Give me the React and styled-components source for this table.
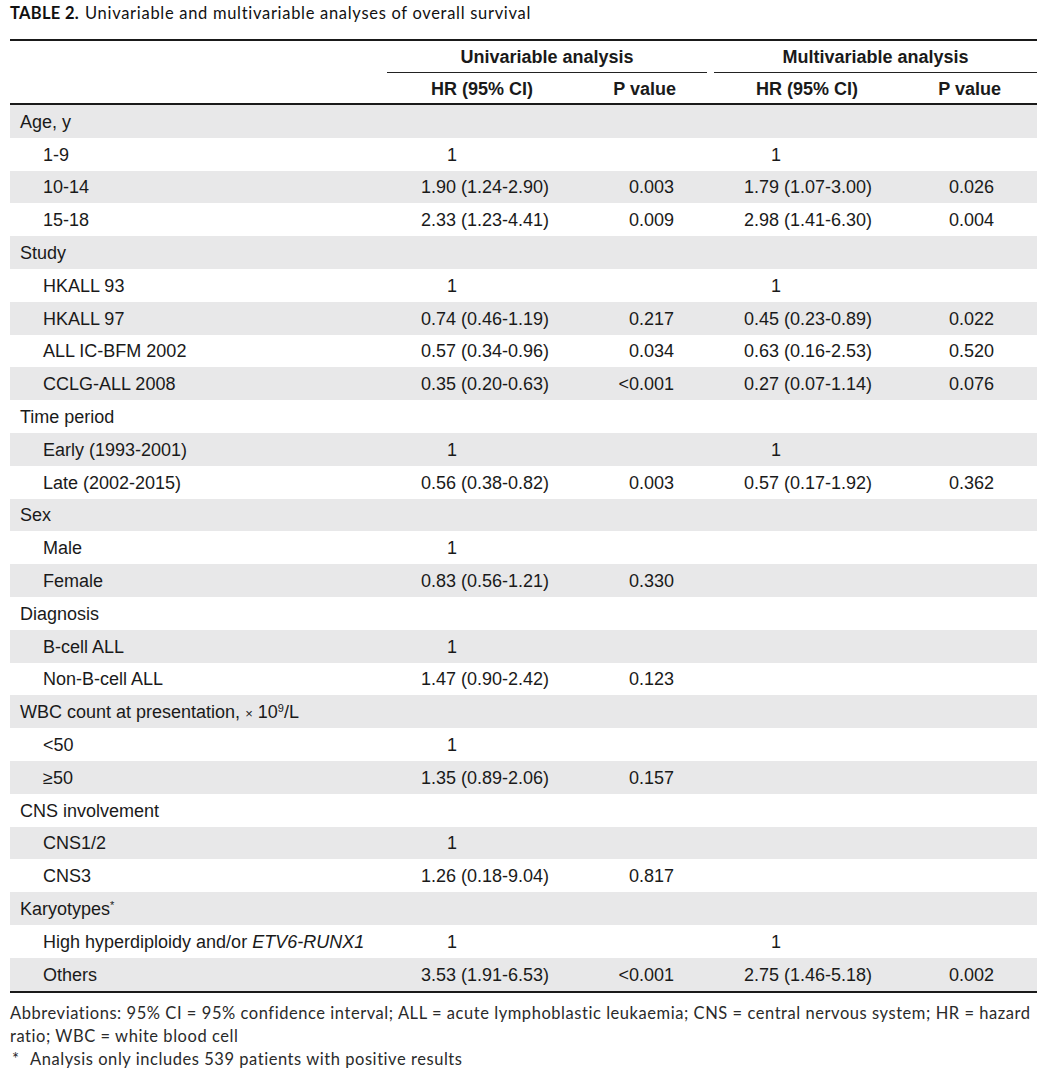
import React from "react";
import styled, { createGlobalStyle, css } from "styled-components";

const Global = createGlobalStyle`
  html, body { margin: 0; padding: 0; background: #fff; }
  body { font-family: "Liberation Sans", Arial, sans-serif; color: #1a1a1a; }
`;

const COLS = "377px 203px 117px 7px 201px 122px";

const Page = styled.div`
  width: 1027px;
  padding: 4px 9px 0 10px;
`;

const Title = styled.div`
  font-family: Lato, "Open Sans", sans-serif;
  font-size: 16.5px;
  letter-spacing: 0.7px;
  line-height: 19px;
  color: #111;
  height: 35px;
  b { font-weight: 700; margin-right: 6px; letter-spacing: 0.3px; }
`;

const Head = styled.div`
  border-top: 2px solid #1a1a1a;
  border-bottom: 2px solid #1a1a1a;
  display: grid;
  grid-template-columns: ${COLS};
  font-weight: 700;
  font-size: 18px;
`;

const GroupTitle = styled.div`
  grid-column: ${(p) => p.$span};
  height: 32px;
  padding-top: 1px;
  box-sizing: border-box;
  border-bottom: 1px solid #222;
  display: flex;
  align-items: center;
  justify-content: center;
`;

const Spacer = styled.div``;

const SubTitle = styled.div`
  height: 30px;
  padding-top: 2px;
  box-sizing: border-box;
  display: flex;
  align-items: center;
  justify-content: ${(p) => (p.$right ? "flex-end" : "flex-start")};
  ${(p) => (p.$right ? css`padding-right: ${p.$pad}px;` : css`padding-left: ${p.$pad}px;`)}
`;

const Body = styled.div`
  border-bottom: 2px solid #1a1a1a;
`;

const Row = styled.div`
  display: grid;
  grid-template-columns: ${COLS};
  height: 32.8px;
  padding-top: 2px;
  box-sizing: border-box;
  align-items: center;
  font-size: 18px;
  background: ${(p) => (p.$shade ? "#e8e8e9" : "#fff")};
`;

const Label = styled.div`
  padding-left: ${(p) => (p.$indent ? 33 : 10)}px;
  white-space: nowrap;
  grid-column: 1;
  sup { font-size: 11px; vertical-align: 6px; line-height: 0; }
  .x { font-size: 13px; }
`;

const HR = styled.div`
  padding-left: ${(p) => p.$pad}px;
  white-space: nowrap;
`;

const P = styled.div`
  text-align: right;
  padding-right: ${(p) => p.$pad}px;
  white-space: nowrap;
`;

const Footer = styled.div`
  font-family: Lato, "Open Sans", sans-serif;
  font-size: 16.5px;
  letter-spacing: 0.55px;
  line-height: 23px;
  color: #2a2a2a;
  padding-top: 9px;
  white-space: nowrap;
`;

const Note = styled.div`
  display: flex;
  span:first-child { width: 20px; padding-left: 2px; box-sizing: border-box; }
`;

const rows = [
  { label: "Age, y" },
  { label: "1-9", indent: true, u: "1", m: "1" },
  { label: "10-14", indent: true, u: "1.90 (1.24-2.90)", up: "0.003", m: "1.79 (1.07-3.00)", mp: "0.026" },
  { label: "15-18", indent: true, u: "2.33 (1.23-4.41)", up: "0.009", m: "2.98 (1.41-6.30)", mp: "0.004" },
  { label: "Study" },
  { label: "HKALL 93", indent: true, u: "1", m: "1" },
  { label: "HKALL 97", indent: true, u: "0.74 (0.46-1.19)", up: "0.217", m: "0.45 (0.23-0.89)", mp: "0.022" },
  { label: "ALL IC-BFM 2002", indent: true, u: "0.57 (0.34-0.96)", up: "0.034", m: "0.63 (0.16-2.53)", mp: "0.520" },
  { label: "CCLG-ALL 2008", indent: true, u: "0.35 (0.20-0.63)", up: "<0.001", m: "0.27 (0.07-1.14)", mp: "0.076" },
  { label: "Time period" },
  { label: "Early (1993-2001)", indent: true, u: "1", m: "1" },
  { label: "Late (2002-2015)", indent: true, u: "0.56 (0.38-0.82)", up: "0.003", m: "0.57 (0.17-1.92)", mp: "0.362" },
  { label: "Sex" },
  { label: "Male", indent: true, u: "1" },
  { label: "Female", indent: true, u: "0.83 (0.56-1.21)", up: "0.330" },
  { label: "Diagnosis" },
  { label: "B-cell ALL", indent: true, u: "1" },
  { label: "Non-B-cell ALL", indent: true, u: "1.47 (0.90-2.42)", up: "0.123" },
  {
    label: (
      <>
        WBC count at presentation, <span className="x">×</span> 10<sup>9</sup>/L
      </>
    ),
  },
  { label: "<50", indent: true, u: "1" },
  { label: "≥50", indent: true, u: "1.35 (0.89-2.06)", up: "0.157" },
  { label: "CNS involvement" },
  { label: "CNS1/2", indent: true, u: "1" },
  { label: "CNS3", indent: true, u: "1.26 (0.18-9.04)", up: "0.817" },
  {
    label: (
      <>
        Karyotypes<sup>*</sup>
      </>
    ),
  },
  {
    label: (
      <>
        High hyperdiploidy and/or <i>ETV6-RUNX1</i>
      </>
    ),
    indent: true,
    u: "1",
    m: "1",
  },
  { label: "Others", indent: true, u: "3.53 (1.91-6.53)", up: "<0.001", m: "2.75 (1.46-5.18)", mp: "0.002" },
];

export default function App() {
  return (
    <Page>
      <Global />
      <Title>
        <b>TABLE 2.</b>Univariable and multivariable analyses of overall survival
      </Title>
      <Head>
        <Spacer />
        <GroupTitle $span="2 / 4">Univariable analysis</GroupTitle>
        <Spacer />
        <GroupTitle $span="5 / 7">Multivariable analysis</GroupTitle>
        <Spacer />
        <SubTitle $pad={44}>HR (95% CI)</SubTitle>
        <SubTitle $right $pad={31}>P value</SubTitle>
        <Spacer />
        <SubTitle $pad={42}>HR (95% CI)</SubTitle>
        <SubTitle $right $pad={36}>P value</SubTitle>
      </Head>
      <Body>
        {rows.map((r, i) => (
          <Row key={i} $shade={i % 2 === 0}>
            <Label $indent={r.indent}>{r.label}</Label>
            <HR $pad={r.u === "1" ? 60 : 34}>{r.u}</HR>
            <P $pad={33}>{r.up}</P>
            <Spacer />
            <HR $pad={r.m === "1" ? 57 : 30}>{r.m}</HR>
            <P $pad={43}>{r.mp}</P>
          </Row>
        ))}
      </Body>
      <Footer>
        <div>
          Abbreviations: 95% CI = 95% confidence interval; ALL = acute lymphoblastic leukaemia; CNS = central nervous
          system; HR = hazard
          <br />
          ratio; WBC = white blood cell
        </div>
        <Note>
          <span>*</span>
          <span>Analysis only includes 539 patients with positive results</span>
        </Note>
      </Footer>
    </Page>
  );
}
